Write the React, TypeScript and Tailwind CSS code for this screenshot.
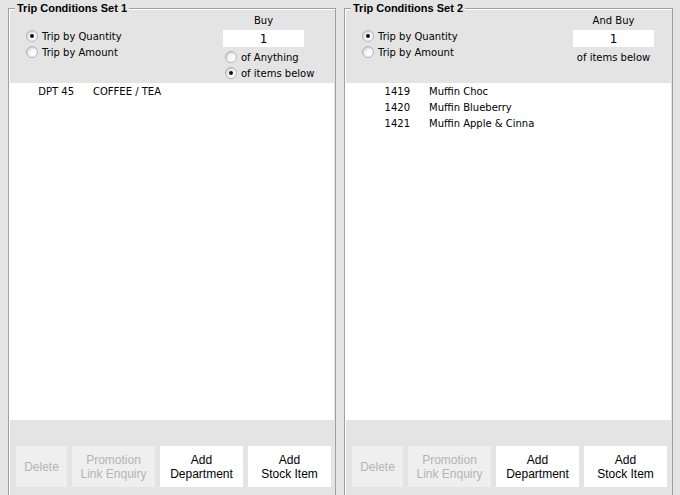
import React from "react";

const font = "font-['Tahoma','DejaVu_Sans',sans-serif]";

const Radio = ({ checked, label }: { checked?: boolean; label: string }) => {
  return (
    <div className="flex items-center h-4">
      <svg width="12" height="12" viewBox="0 0 12 12" className="shrink-0">
        <defs>
          <radialGradient id="rg" cx="0.65" cy="0.7" r="0.7">
            <stop offset="0" stopColor="#ffffff" />
            <stop offset="0.6" stopColor="#f4f4f4" />
            <stop offset="1" stopColor="#cfcfcf" />
          </radialGradient>
        </defs>
        <circle cx="6" cy="6" r="5.5" fill="url(#rg)" stroke="#b4b4b4" strokeWidth="1" />
        {checked && <circle cx="6" cy="6" r="2" fill="#111" />}
      </svg>
      <span className="ml-[4px] whitespace-nowrap text-[10px] text-black">{label}</span>
    </div>
  );
};

const Btn = ({ top, bottom, disabled, w }: { top: string; bottom?: string; disabled?: boolean; w: string }) => {
  return (
    <div
      className={`${w} h-[41px] flex flex-col items-center justify-center text-[12px] leading-[14px] font-['Liberation_Sans',Arial,sans-serif] ${
        disabled ? "bg-[#efefef] text-[#b4b4b4]" : "bg-white text-black"
      }`}
    >
      <span>{top}</span>
      {bottom && <span>{bottom}</span>}
    </div>
  );
};

type Row = { code: string; name: string };

const GroupBox = ({
  title,
  rows,
  right,
  w,
}: {
  title: string;
  rows: Row[];
  right: React.ReactNode;
  w: string;
}) => {
  return (
    <div className={`relative ${w} border border-[#a0a0a0] shadow-[inset_1px_1px_0_#ffffff] p-[1px] pb-0`}>
      <div className="absolute left-[6px] -top-[8px] px-[2px] bg-[#e4e4e4] text-[11px] leading-[14px] font-bold text-black font-['Liberation_Sans',sans-serif]">
        {title}
      </div>
      <div className="h-[73px] flex justify-between">
        <div className="pl-[16px] pt-[18px]">
          <Radio checked label="Trip by Quantity" />
          <Radio label="Trip by Amount" />
        </div>
        {right}
      </div>
      <div className="h-[337px] bg-white text-[10px] text-black">
        {rows.map((r) => (
          <div key={r.code} className="flex h-4 items-center">
            <span className="w-[64px] text-right">{r.code}</span>
            <span className="ml-[19px]">{r.name}</span>
          </div>
        ))}
      </div>
      <div className="h-[80px] pt-[26px] pl-[6px] flex gap-[5px]">
        <Btn w="w-[51px]" top="Delete" disabled />
        <Btn w="w-[83px]" top="Promotion" bottom="Link Enquiry" disabled />
        <Btn w="w-[83px]" top="Add" bottom="Department" />
        <Btn w="w-[83px]" top="Add" bottom="Stock Item" />
      </div>
    </div>
  );
};

const App = () => {
  return (
    <div className={`w-[680px] h-[495px] overflow-hidden bg-[#e4e4e4] pt-[8px] pl-[8px] ${font}`}>
      <div className="flex gap-[8px]">
        <GroupBox
          w="w-[328px]"
          title="Trip Conditions Set 1"
          rows={[{ code: "DPT 45", name: "COFFEE / TEA" }]}
          right={
            <div className="w-[81px] mr-[30px] pt-[4px] text-[10px] text-black">
              <div className="h-[14px] leading-[14px] text-center">Buy</div>
              <div className="mt-[2px] h-[17px] bg-white flex items-center justify-center text-[12px]">1</div>
              <div className="mt-[2px] pl-[2px]">
                <Radio label="of Anything" />
                <Radio checked label="of items below" />
              </div>
            </div>
          }
        />
        <GroupBox
          w="w-[329px]"
          title="Trip Conditions Set 2"
          rows={[
            { code: "1419", name: "Muffin Choc" },
            { code: "1420", name: "Muffin Blueberry" },
            { code: "1421", name: "Muffin Apple & Cinna" },
          ]}
          right={
            <div className="w-[81px] mr-[17px] pt-[4px] text-[10px] text-black">
              <div className="h-[14px] leading-[14px] text-center">And Buy</div>
              <div className="mt-[2px] h-[17px] bg-white flex items-center justify-center text-[12px]">1</div>
              <div className="mt-[2px] h-4 flex items-center justify-center whitespace-nowrap">of items below</div>
            </div>
          }
        />
      </div>
    </div>
  );
};

export default App;
